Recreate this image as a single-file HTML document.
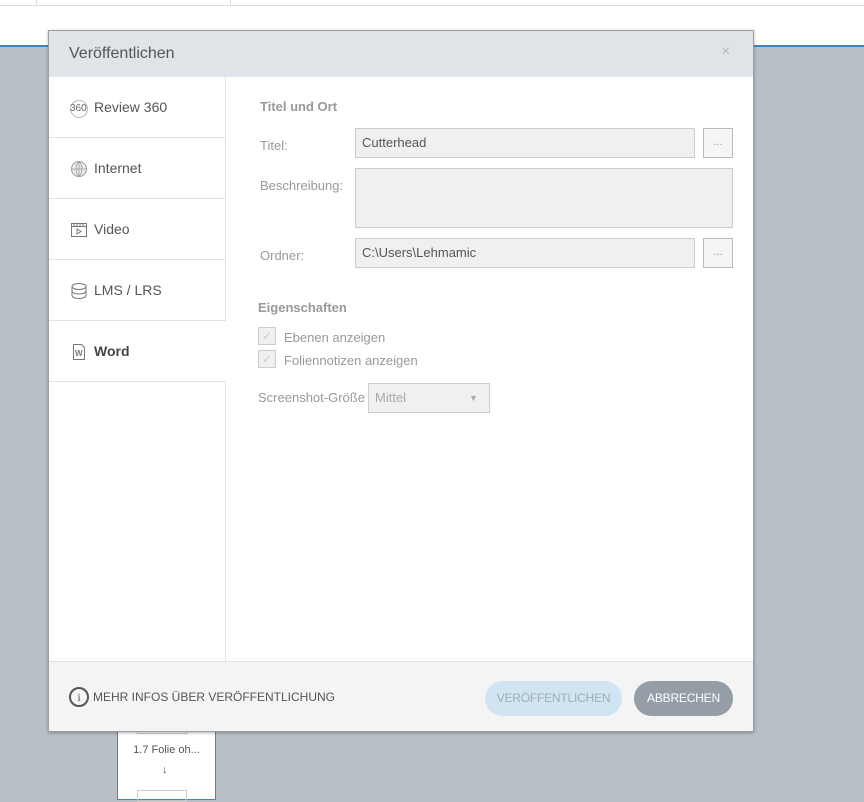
<!DOCTYPE html>
<html><head><meta charset="utf-8"><style>
*{margin:0;padding:0;box-sizing:border-box}
body{width:864px;height:798px;background:#b9bfc7;font-family:"Liberation Sans",sans-serif;position:relative;overflow:hidden}
.abs{position:absolute}
.top{left:0;top:0;width:864px;height:45px;background:#fff}
.blue{left:0;top:45px;width:864px;height:2px;background:#3a86c0}
.dlg{left:48px;top:30px;width:706px;height:702px;background:#fff;border:1px solid #9aa0a6;box-shadow:0 1px 3px rgba(0,0,0,.3)}
.hdr{left:0;top:0;width:704px;height:46px;background:#e0e4e8;color:#555;font-size:16px;padding:14px 20px}
.nav{left:0;top:46px;width:177px;height:584px;border-right:1px solid #e2e2e2}
.item{position:absolute;left:0;width:177px;height:61px;border-bottom:1px solid #e2e2e2;font-size:14px;color:#555;padding-left:45px;line-height:61px}
.ic{position:absolute;left:21px;top:22px}
.lbl{font-size:13px;color:#999}
.inp{background:#f0f0f0;border:1px solid #ccc;font-size:13px;color:#555;padding:6px 6px}
.dots{border:1px solid #bbb;background:#f5f5f5;color:#999;font-size:11px;text-align:center;line-height:26px}
.cb{width:18px;height:18px;border:1px solid #ccc;background:#f0f0f0}
.ft{left:0;top:630px;width:704px;height:70px;background:#f4f4f4;border-top:1px solid #e0e0e0}
.btn{height:35px;border-radius:18px;font-size:12px;letter-spacing:-0.2px;text-align:center;line-height:35px;top:19px}
</style></head><body>
<div class="abs top"><div class="abs" style="left:0;top:5px;width:864px;height:1px;background:#ddd"></div><div class="abs" style="left:36px;top:0;width:1px;height:5px;background:#ddd"></div><div class="abs" style="left:230px;top:0;width:1px;height:5px;background:#ddd"></div></div>
<div class="abs blue"></div>
<div class="abs" style="left:117px;top:720px;width:99px;height:80px;background:#fff;border:1px solid #3a86c0;border-top:none">
<div class="abs" style="left:19px;top:0;width:50px;height:14px;border:1px solid #ccc;border-top:none"></div>
<div class="abs" style="left:0;top:24px;width:97px;text-align:center;font-size:11px;color:#555">1.7 Folie oh...</div>
<div class="abs" style="left:44px;top:44px;font-size:11px;color:#555">↓</div>
<div class="abs" style="left:19px;top:70px;width:50px;height:12px;border:1px solid #ccc"></div></div>
<div class="abs dlg">
<div class="abs hdr">Veröffentlichen<span class="abs" style="left:672px;top:12px;color:#bbb;font-size:16px">×</span></div>
<div class="abs nav">
<div class="item" style="top:0"><span class="ic" style="top:23px;width:18px;height:18px;border:1px solid #bbb;border-radius:50%;font-size:10px;line-height:16px;color:#666;text-indent:-1px">360</span>Review 360</div>
<div class="item" style="top:61px"><svg class="ic" width="18" height="18" viewBox="0 0 18 18"><circle cx="9" cy="9" r="7.5" fill="#e8ecf0" stroke="#999"/><path d="M1.5 9h15M9 1.5v15M9 1.5c-4 4-4 11 0 15M9 1.5c4 4 4 11 0 15" stroke="#999" fill="none" stroke-width=".8"/></svg>Internet</div>
<div class="item" style="top:122px"><svg class="ic" width="18" height="18" viewBox="0 0 18 18"><rect x="1.5" y="2.5" width="15" height="13" fill="none" stroke="#777"/><path d="M1.5 5.5h15M4 2.5v3M7 2.5v3M10 2.5v3M13 2.5v3" stroke="#777"/><path d="M7 8l4 2.5L7 13z" fill="none" stroke="#777"/></svg>Video</div>
<div class="item" style="top:183px"><svg class="ic" width="18" height="18" viewBox="0 0 18 18"><ellipse cx="9" cy="4.5" rx="7" ry="3" fill="none" stroke="#777"/><path d="M2 4.5v9c0 1.7 3 3 7 3s7-1.3 7-3v-9M2 9c0 1.7 3 3 7 3s7-1.3 7-3" fill="none" stroke="#777"/></svg>LMS / LRS</div>
<div class="item" style="top:244px;color:#444;font-weight:bold;background:#fff"><svg class="ic" width="18" height="18" viewBox="0 0 18 18"><path d="M3.5 1.5h8l3 3v12h-11z" fill="none" stroke="#777"/><text x="5" y="13" font-size="8" fill="#777" font-family="Liberation Sans">W</text></svg>Word</div>
</div>
<div class="abs" style="left:211px;top:68px;font-size:13px;font-weight:bold;color:#999">Titel und Ort</div>
<div class="abs lbl" style="left:211px;top:107px">Titel:</div>
<div class="abs inp" style="left:306px;top:97px;width:340px;height:30px">Cutterhead</div>
<div class="abs dots" style="left:654px;top:97px;width:30px;height:30px">...</div>
<div class="abs lbl" style="left:211px;top:147px">Beschreibung:</div>
<div class="abs inp" style="left:306px;top:137px;width:378px;height:60px"></div>
<div class="abs lbl" style="left:211px;top:217px">Ordner:</div>
<div class="abs inp" style="left:306px;top:207px;width:340px;height:30px">C:\Users\Lehmamic</div>
<div class="abs dots" style="left:654px;top:207px;width:30px;height:30px">...</div>
<div class="abs" style="left:209px;top:269px;font-size:13px;font-weight:bold;color:#999">Eigenschaften</div>
<div class="abs cb" style="left:209px;top:296px"></div><div class="abs" style="left:213px;top:298px;color:#ccc;font-size:12px">✓</div>
<div class="abs lbl" style="left:235px;top:299px">Ebenen anzeigen</div>
<div class="abs cb" style="left:209px;top:319px"></div><div class="abs" style="left:213px;top:321px;color:#ccc;font-size:12px">✓</div>
<div class="abs lbl" style="left:235px;top:322px">Foliennotizen anzeigen</div>
<div class="abs lbl" style="left:209px;top:359px">Screenshot-Größe</div>
<div class="abs inp" style="left:319px;top:352px;width:122px;height:30px;color:#aaa">Mittel<span class="abs" style="left:100px;top:9px;font-size:9px;color:#aaa">▼</span></div>
<div class="abs ft">
<div class="abs" style="left:20px;top:25px;width:20px;height:20px;border:2px solid #555;border-radius:50%;font-size:12px;text-align:center;line-height:16px;color:#555;font-family:'Liberation Serif',serif">i</div>
<div class="abs" style="left:44px;top:28px;font-size:12px;color:#555">MEHR INFOS ÜBER VERÖFFENTLICHUNG</div>
<div class="abs btn" style="left:436px;width:137px;background:#d0e4f2;color:#a0acb8">VERÖFFENTLICHEN</div>
<div class="abs btn" style="left:585px;width:99px;background:#959ea6;color:#fff">ABBRECHEN</div>
</div>
</div>
</body></html>
